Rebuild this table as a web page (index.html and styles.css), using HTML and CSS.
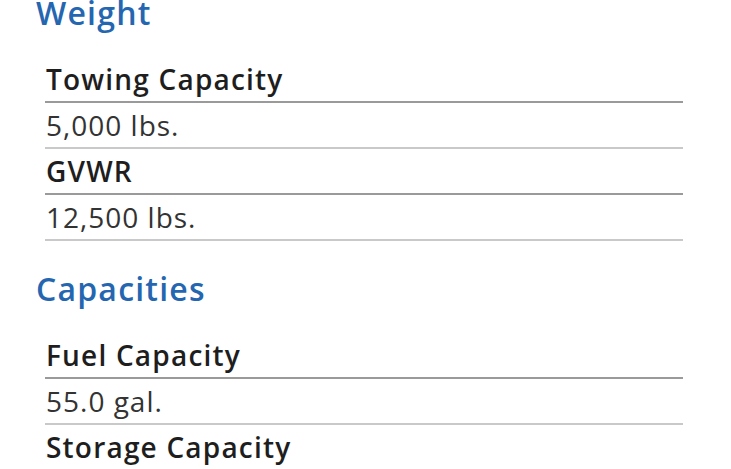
FILE: index.html
```html
<!DOCTYPE html>
<html lang="en">
<head>
<meta charset="utf-8">
<title>Specifications</title>
<link rel="stylesheet" href="styles.css">
</head>
<body>
<div class="specs">
  <section class="group">
    <h2 class="group-title">Weight</h2>
    <dl class="rows">
      <dt class="label">Towing Capacity</dt>
      <dd class="value">5,000 lbs.</dd>
      <dt class="label">GVWR</dt>
      <dd class="value">12,500 lbs.</dd>
    </dl>
  </section>
  <section class="group">
    <h2 class="group-title">Capacities</h2>
    <dl class="rows">
      <dt class="label">Fuel Capacity</dt>
      <dd class="value">55.0 gal.</dd>
      <dt class="label">Storage Capacity</dt>
    </dl>
  </section>
</div>
</body>
</html>
```

FILE: styles.css
```css
html, body {
  margin: 0;
  padding: 0;
  background: #fff;
}
body {
  font-family: "Open Sans", "Noto Sans", sans-serif;
  color: #222;
  overflow: hidden;
}
.specs {
  display: flex;
  flex-direction: column;
  padding-left: 36px;
}
.group + .group {
  margin-top: 35px;
}
.group-title {
  margin: 0 0 32px 0;
  font-size: 32px;
  line-height: 25px;
  font-weight: 600;
  letter-spacing: 1.2px;
  color: #2566b0;
}
.rows {
  margin: 0 0 0 9px;
  width: 638px;
  display: flex;
  flex-direction: column;
}
.label, .value {
  margin: 0;
  padding-left: 1px;
  font-size: 28px;
  line-height: 44px;
}
.label {
  font-weight: 600;
  letter-spacing: 1.2px;
  color: #1e1e1e;
  border-bottom: 2px solid #9a9a9a;
}
.value {
  font-weight: 400;
  letter-spacing: 1px;
  color: #333;
  border-bottom: 2px solid #c9c9c9;
}
```
